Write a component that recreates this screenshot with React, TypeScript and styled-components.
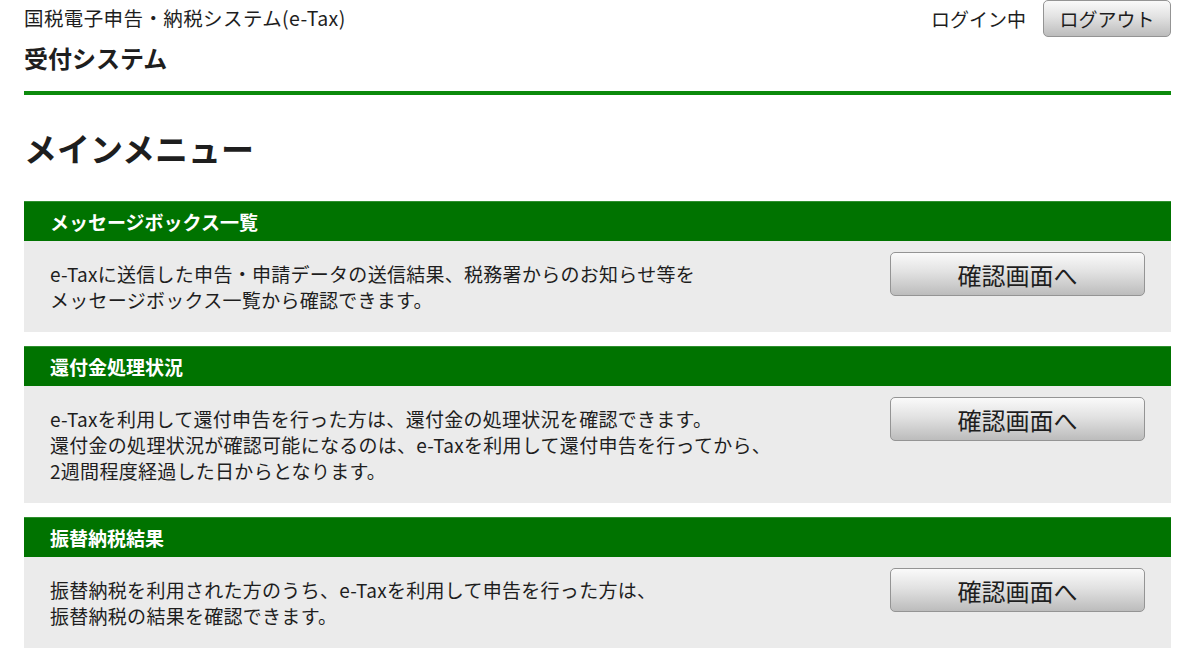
import React from "react";
import styled, { createGlobalStyle } from "styled-components";

const GlobalStyle = createGlobalStyle`
  html, body {
    margin: 0;
    padding: 0;
    background: #ffffff;
  }
  body {
    font-family: "Noto Sans CJK JP", "Noto Sans", sans-serif;
    color: #1e1e1e;
    font-size: 19px;
  }
`;

const Page = styled.div`
  padding: 0 27px 0 24px;
`;

const Header = styled.header`
  display: flex;
  justify-content: space-between;
  align-items: flex-start;
  border-bottom: 4px solid #0c8a0c;
  padding-bottom: 15px;
`;

const Brand = styled.div`
  display: flex;
  flex-direction: column;
  gap: 4px;
`;

const SiteName = styled.div`
  font-size: 19.5px;
  letter-spacing: 0.4px;
  line-height: 36px;
`;

const SystemName = styled.div`
  font-size: 24px;
  font-weight: 700;
  line-height: 36px;
`;

const UserArea = styled.div`
  display: flex;
  align-items: center;
  gap: 17px;
`;

const LoginState = styled.span`
  font-size: 19px;
`;

const GrayButton = styled.button<{ $wide?: boolean }>`
  font-family: inherit;
  color: #1e1e1e;
  border: 1px solid #949494;
  border-radius: 5px;
  background: linear-gradient(to bottom, #fafafa 0%, #e2e2e2 45%, #bcbcbc 100%);
  cursor: pointer;
  padding: 0;
  width: ${(p) => (p.$wide ? "255px" : "128px")};
  height: ${(p) => (p.$wide ? "44px" : "37px")};
  font-size: ${(p) => (p.$wide ? "24px" : "19px")};
  flex-shrink: 0;
`;

const PageTitle = styled.h1`
  margin: 28px 0 28px;
  font-size: 33px;
  line-height: 50px;
  font-weight: 700;
`;

const Sections = styled.div`
  display: flex;
  flex-direction: column;
  gap: 14px;
`;

const Section = styled.section``;

const SectionHead = styled.h2`
  margin: 0;
  height: 40px;
  box-sizing: border-box;
  display: flex;
  align-items: center;
  padding: 0 26px;
  background: #007300;
  border-top: 1px solid #2f8f2f;
  color: #ffffff;
  font-size: 19px;
  font-weight: 700;
`;

const SectionBody = styled.div`
  background: #ebebeb;
  display: flex;
  justify-content: space-between;
  align-items: flex-start;
  padding: 11px 26px 19px 26px;
`;

const Description = styled.p`
  margin: 9px 0 0;
  font-size: 19px;
  letter-spacing: 0.28px;
  line-height: 26px;
`;

const menus = [
  {
    title: "メッセージボックス一覧",
    lines: [
      "e-Taxに送信した申告・申請データの送信結果、税務署からのお知らせ等を",
      "メッセージボックス一覧から確認できます。",
    ],
  },
  {
    title: "還付金処理状況",
    lines: [
      "e-Taxを利用して還付申告を行った方は、還付金の処理状況を確認できます。",
      "還付金の処理状況が確認可能になるのは、e-Taxを利用して還付申告を行ってから、",
      "2週間程度経過した日からとなります。",
    ],
  },
  {
    title: "振替納税結果",
    lines: [
      "振替納税を利用された方のうち、e-Taxを利用して申告を行った方は、",
      "振替納税の結果を確認できます。",
    ],
  },
];

export default function App() {
  return (
    <>
      <GlobalStyle />
      <Page>
        <Header>
          <Brand>
            <SiteName>国税電子申告・納税システム(e-Tax)</SiteName>
            <SystemName>受付システム</SystemName>
          </Brand>
          <UserArea>
            <LoginState>ログイン中</LoginState>
            <GrayButton>ログアウト</GrayButton>
          </UserArea>
        </Header>
        <PageTitle>メインメニュー</PageTitle>
        <Sections>
          {menus.map((m) => (
            <Section key={m.title}>
              <SectionHead>{m.title}</SectionHead>
              <SectionBody>
                <Description>
                  {m.lines.map((l, i) => (
                    <React.Fragment key={i}>
                      {i > 0 && <br />}
                      {l}
                    </React.Fragment>
                  ))}
                </Description>
                <GrayButton $wide>確認画面へ</GrayButton>
              </SectionBody>
            </Section>
          ))}
        </Sections>
      </Page>
    </>
  );
}
